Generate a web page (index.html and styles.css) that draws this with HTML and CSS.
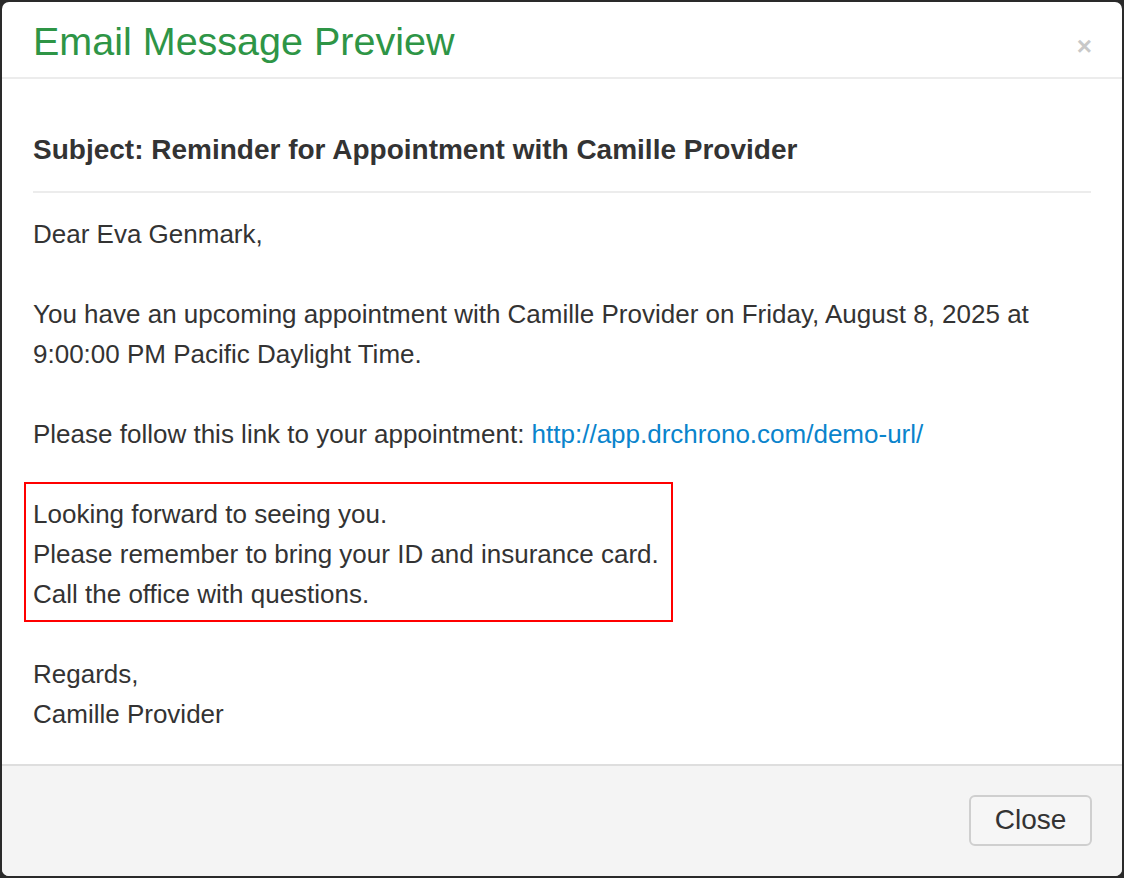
FILE: index.html
```html
<!DOCTYPE html>
<html>
<head>
<meta charset="utf-8">
<link rel="stylesheet" href="styles.css">
</head>
<body>
<div class="modal">
  <div class="modal-header">
    <h1 class="title">Email Message Preview</h1>
    <span class="close-x">×</span>
  </div>
  <div class="modal-body">
    <h2 class="subject">Subject: Reminder for Appointment with Camille Provider</h2>
    <div class="message">
      <p>Dear Eva Genmark,</p>
      <p>You have an upcoming appointment with Camille Provider on Friday, August 8, 2025 at 9:00:00 PM Pacific Daylight Time.</p>
      <p>Please follow this link to your appointment: <a href="#" class="link">http://app.drchrono.com/demo-url/</a></p>
      <div class="highlight">Looking forward to seeing you.<br>Please remember to bring your ID and insurance card.<br>Call the office with questions.</div>
      <p>Regards,<br>Camille Provider</p>
    </div>
  </div>
  <div class="modal-footer">
    <button class="btn">Close</button>
  </div>
</div>
</body>
</html>
```

FILE: styles.css
```css
html, body {
  margin: 0;
  padding: 0;
  background: #2a2a2a;
  height: 100%;
}
body {
  padding: 2px;
  box-sizing: border-box;
  font-family: "Liberation Sans", Arial, sans-serif;
  color: #333;
}
.modal {
  background: #fff;
  border-radius: 7px;
  height: 874px;
  display: flex;
  flex-direction: column;
  overflow: hidden;
}
.modal-header {
  display: flex;
  justify-content: space-between;
  align-items: center;
  height: 75px;
  padding: 0 30px 0 31px;
  border-bottom: 2px solid #ececec;
}
.title {
  margin: 0;
  font-size: 39.5px;
  font-weight: normal;
  color: #2e9546;
  line-height: 1;
  position: relative;
  top: 2px;
}
.close-x {
  color: #c8c8c8;
  font-size: 26px;
  font-weight: bold;
  line-height: 1;
  position: relative;
  top: 6px;
}
.modal-body {
  flex: 1;
  padding: 0 31px;
}
.subject {
  margin: 0;
  padding: 56px 0 26px;
  font-size: 28px;
  font-weight: bold;
  line-height: 30px;
  border-bottom: 2px solid #ececec;
}
.message {
  font-size: 26px;
  line-height: 40px;
  padding-top: 21px;
}
.message p {
  margin: 0 0 40px;
}
.message p:last-child {
  margin-bottom: 0;
}
.link {
  color: #0a84cc;
  text-decoration: none;
}
.highlight {
  display: inline-block;
  border: 2px solid #ff0000;
  margin: -12px 0 32px -9px;
  padding: 10px 12px 6px 7px;
}
.modal-footer {
  border-top: 2px solid #dedede;
  background: #f4f4f4;
  height: 110px;
  flex-shrink: 0;
  display: flex;
  justify-content: flex-end;
  align-items: center;
  padding: 0 30px;
}
.btn {
  font-family: "Liberation Sans", Arial, sans-serif;
  font-size: 28px;
  color: #333;
  background: #f6f6f6;
  border: 2px solid #cfcfcf;
  border-radius: 6px;
  width: 123px;
  height: 51px;
  margin-top: -2px;
}
```
